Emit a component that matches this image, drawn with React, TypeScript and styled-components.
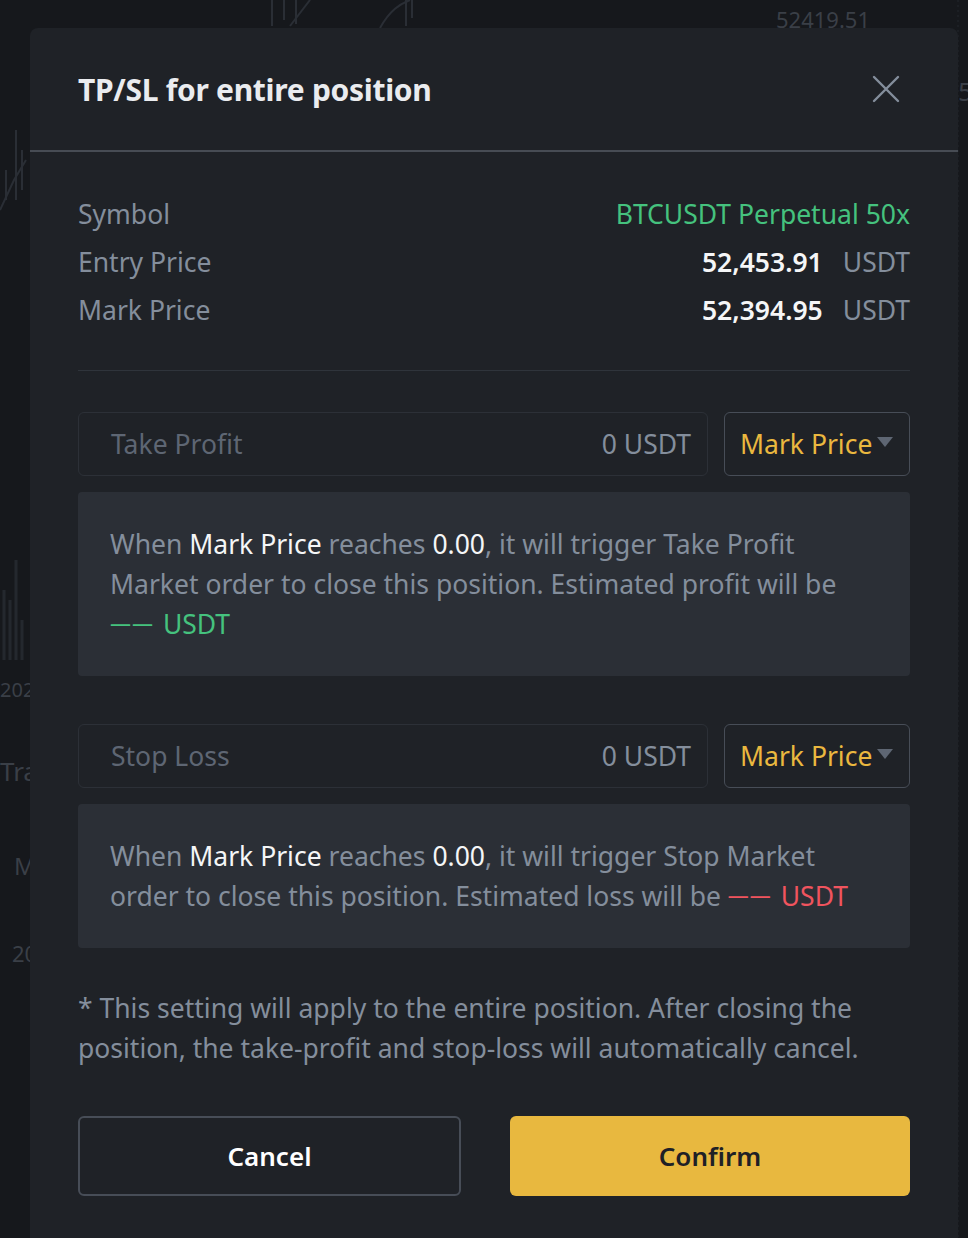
import React from "react";
import styled, { createGlobalStyle } from "styled-components";

const Global = createGlobalStyle`
  html, body { margin: 0; padding: 0; background: #16181c; }
  body { font-family: "Noto Sans", "Open Sans", sans-serif; -webkit-font-smoothing: antialiased; }
  * { box-sizing: border-box; }
`;

const Page = styled.div`
  position: relative;
  width: 968px;
  height: 1238px;
  overflow: hidden;
  background: #16181c;
`;

const BgText = styled.span<{ $x: number; $y: number; $size?: number }>`
  position: absolute;
  left: ${(p) => p.$x}px;
  top: ${(p) => p.$y}px;
  font-size: ${(p) => p.$size ?? 22}px;
  color: #3a3f47;
  line-height: 1;
`;

const BgChart = styled.svg`
  position: absolute;
  left: 0;
  top: 0;
`;

const Backdrop = styled.div`
  position: relative;
  padding: 28px 0 0 30px;
`;

const Modal = styled.div`
  width: 928px;
  min-height: 1240px;
  background: #1f2227;
  border-radius: 8px 8px 0 0;
  display: flex;
  flex-direction: column;
`;

const Header = styled.div`
  height: 124px;
  padding: 0 48px;
  display: flex;
  align-items: center;
  justify-content: space-between;
  border-bottom: 2px solid #474c54;
`;

const Title = styled.h2`
  margin: 0;
  font-size: 30px;
  font-weight: 700;
  color: #eaecef;
  letter-spacing: -0.3px;
`;

const CloseBtn = styled.button`
  background: none;
  border: none;
  padding: 0;
  width: 28px;
  height: 28px;
  display: flex;
  align-items: center;
  justify-content: center;
  cursor: pointer;
  margin-right: 10px;
`;

const Body = styled.div`
  padding: 38px 48px 48px;
  display: flex;
  flex-direction: column;
`;

const InfoList = styled.div`
  display: flex;
  flex-direction: column;
  padding-bottom: 36px;
  border-bottom: 1px solid #2f343b;
`;

const InfoRow = styled.div`
  height: 48px;
  display: flex;
  align-items: center;
  justify-content: space-between;
  font-size: 26.5px;
`;

const Label = styled.span`
  color: #848e9c;
`;

const Value = styled.span<{ $green?: boolean }>`
  display: flex;
  align-items: center;
  gap: 20px;
  color: ${(p) => (p.$green ? "#45c27e" : "#eaecef")};
`;

const Num = styled.span`
  font-weight: 600;
  color: #f5f6f7;
`;

const Unit = styled.span`
  color: #848e9c;
`;

const Section = styled.div<{ $first?: boolean }>`
  margin-top: ${(p) => (p.$first ? 41 : 48)}px;
  display: flex;
  flex-direction: column;
  gap: 16px;
`;

const InputRow = styled.div`
  display: grid;
  grid-template-columns: 1fr 186px;
  gap: 16px;
  height: 64px;
`;

const InputBox = styled.div`
  border: 1px solid #2c3037;
  border-radius: 6px;
  display: flex;
  align-items: center;
  justify-content: space-between;
  padding: 0 16px 0 32px;
  font-size: 26.5px;
`;

const Placeholder = styled.span`
  color: #5e6673;
`;

const InputUnit = styled.span`
  color: #848e9c;
`;

const Select = styled.div`
  border: 1.5px solid #474d57;
  border-radius: 6px;
  display: flex;
  align-items: center;
  padding: 0 14px 0 15px;
  gap: 5px;
  font-size: 26.5px;
  color: #eab83f;
`;

const Caret = styled.span`
  width: 0;
  height: 0;
  border-left: 8px solid transparent;
  border-right: 8px solid transparent;
  border-top: 10px solid #5e6673;
  margin-top: -4px;
`;

const Hint = styled.div`
  background: #2b2f36;
  border-radius: 4px;
  padding: 32px 32px;
  font-size: 26.5px;
  line-height: 40px;
  color: #848e9c;
`;

const Strong = styled.span`
  color: #f5f6f7;
`;

const Amount = styled.span<{ $tone: "up" | "down" }>`
  color: ${(p) => (p.$tone === "up" ? "#45c27e" : "#f0545e")};
  white-space: nowrap;
`;

const Dashes = styled.span`
  font-size: 21px;
  line-height: 0;
  letter-spacing: 1px;
  margin-right: 2px;
  vertical-align: 0.12em;
`;

const Note = styled.p`
  margin: 40px 0 0;
  font-size: 26.5px;
  line-height: 40px;
  color: #848e9c;
`;

const Buttons = styled.div`
  margin-top: 48px;
  display: grid;
  grid-template-columns: 383px 1fr;
  gap: 49px;
`;

const Button = styled.button<{ $primary?: boolean }>`
  height: 80px;
  border-radius: 6px;
  font-family: inherit;
  font-size: 26px;
  font-weight: 600;
  cursor: pointer;
  border: ${(p) => (p.$primary ? "none" : "2px solid #474d57")};
  background: ${(p) => (p.$primary ? "#e8b83f" : "transparent")};
  color: ${(p) => (p.$primary ? "#1e2026" : "#ffffff")};
`;

const DashLine: React.FC = () => (
  <>
    <Dashes>——</Dashes> USDT
  </>
);

export default function App() {
  return (
    <>
      <Global />
      <Page>
        <BgChart width="968" height="1238" viewBox="0 0 968 1238">
          <g stroke="#2a2e35" strokeWidth="2" fill="none">
            <line x1="272" y1="0" x2="272" y2="26" />
            <line x1="284" y1="0" x2="284" y2="20" />
            <line x1="296" y1="0" x2="296" y2="24" />
            <path d="M290 26 L310 0" />
            <path d="M380 28 C390 10 400 4 410 0" />
            <line x1="406" y1="0" x2="406" y2="26" />
            <line x1="412" y1="0" x2="412" y2="18" />
            <path d="M0 210 L14 180 L26 160" />
            <line x1="16" y1="130" x2="16" y2="200" />
            <line x1="22" y1="150" x2="22" y2="190" />
            <line x1="6" y1="170" x2="6" y2="200" />
          </g>
          <g stroke="#24282e" strokeWidth="3">
            <line x1="4" y1="590" x2="4" y2="660" />
            <line x1="10" y1="600" x2="10" y2="660" />
            <line x1="16" y1="560" x2="16" y2="660" />
            <line x1="22" y1="620" x2="22" y2="660" />
          </g>
          <g stroke="#22262c" strokeWidth="1" strokeDasharray="2 3">
            <line x1="958" y1="0" x2="958" y2="1238" />
            <line x1="990" y1="0" x2="990" y2="28" />
          </g>
        </BgChart>
        <BgText $x={776} $y={8} $size={22}>52419.51</BgText>
        <BgText $x={0} $y={680} $size={20}>202</BgText>
        <BgText $x={0} $y={758} $size={26}>Tra</BgText>
        <BgText $x={14} $y={854} $size={24}>M</BgText>
        <BgText $x={12} $y={942} $size={22}>20</BgText>
        <BgText $x={958} $y={78} $size={26}>5</BgText>
        <Backdrop>
          <Modal>
            <Header>
              <Title>TP/SL for entire position</Title>
              <CloseBtn aria-label="Close">
                <svg width="28" height="28" viewBox="0 0 28 28">
                  <path d="M2 2 L26 26 M26 2 L2 26" stroke="#848e9c" strokeWidth="2.4" strokeLinecap="round" />
                </svg>
              </CloseBtn>
            </Header>
            <Body>
              <InfoList>
                <InfoRow>
                  <Label>Symbol</Label>
                  <Value $green>BTCUSDT Perpetual 50x</Value>
                </InfoRow>
                <InfoRow>
                  <Label>Entry Price</Label>
                  <Value>
                    <Num>52,453.91</Num>
                    <Unit>USDT</Unit>
                  </Value>
                </InfoRow>
                <InfoRow>
                  <Label>Mark Price</Label>
                  <Value>
                    <Num>52,394.95</Num>
                    <Unit>USDT</Unit>
                  </Value>
                </InfoRow>
              </InfoList>

              <Section $first>
                <InputRow>
                  <InputBox>
                    <Placeholder>Take Profit</Placeholder>
                    <InputUnit>0 USDT</InputUnit>
                  </InputBox>
                  <Select>
                    Mark Price
                    <Caret />
                  </Select>
                </InputRow>
                <Hint>
                  When <Strong>Mark Price</Strong> reaches <Strong>0.00</Strong>, it will trigger Take Profit
                  Market order to close this position. Estimated profit will be{" "}
                  <Amount $tone="up">
                    <DashLine />
                  </Amount>
                </Hint>
              </Section>

              <Section>
                <InputRow>
                  <InputBox>
                    <Placeholder>Stop Loss</Placeholder>
                    <InputUnit>0 USDT</InputUnit>
                  </InputBox>
                  <Select>
                    Mark Price
                    <Caret />
                  </Select>
                </InputRow>
                <Hint>
                  When <Strong>Mark Price</Strong> reaches <Strong>0.00</Strong>, it will trigger Stop Market
                  order to close this position. Estimated loss will be{" "}
                  <Amount $tone="down">
                    <DashLine />
                  </Amount>
                </Hint>
              </Section>

              <Note>
                * This setting will apply to the entire position. After closing the position, the take-profit and
                stop-loss will automatically cancel.
              </Note>

              <Buttons>
                <Button>Cancel</Button>
                <Button $primary>Confirm</Button>
              </Buttons>
            </Body>
          </Modal>
        </Backdrop>
      </Page>
    </>
  );
}
